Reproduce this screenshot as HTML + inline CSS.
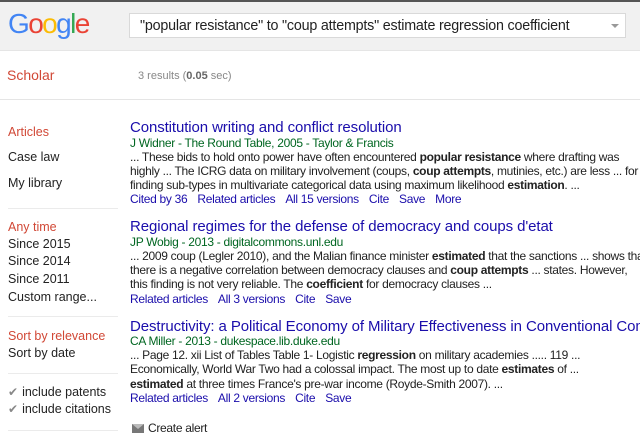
<!DOCTYPE html>
<html><head><meta charset="utf-8"><style>
*{margin:0;padding:0;box-sizing:border-box}
html,body{width:640px;height:441px;overflow:hidden}
body{background:#fff;font-family:"Liberation Sans",Arial,sans-serif;position:relative;color:#222}
#wrap{position:absolute;left:0;top:0;width:640px;height:441px;overflow:hidden}
.a{position:absolute;white-space:nowrap}
#hdr{position:absolute;left:0;top:0;width:640px;height:51px;background:#f1f1f1;border-top:2px solid #555;border-bottom:1px solid #e5e5e5}
#box{position:absolute;left:129px;top:13px;width:497px;height:25px;background:#fff;border:1px solid #d9d9d9;font-size:14.3px;letter-spacing:-0.2px;padding:4px 10px;color:#222;white-space:nowrap;overflow:hidden}
.sb{font-size:12.5px;color:#222}
.red{color:#d14836}
.hl{position:absolute;left:8px;width:110px;height:1px;background:#ebebeb}
.t{font-size:15px;letter-spacing:-0.1px;color:#1a0dab}
.g{font-size:12px;letter-spacing:-0.3px;color:#006621}
.s{font-size:12px;letter-spacing:-0.3px;color:#222}
.l{font-size:12px;letter-spacing:-0.3px;color:#1a0dab}
.l span{margin-right:10px}
.ck{color:#888;font-size:12px;margin-right:4px}
</style></head><body><div id="wrap">
<div id="hdr"></div>
<div class="a" style="left:8px;top:8px;font-size:28px;letter-spacing:-1.6px"><span style="color:#4285f4">G</span><span style="color:#ea4335">o</span><span style="color:#fbbc05">o</span><span style="color:#4285f4">g</span><span style="color:#34a853">l</span><span style="color:#ea4335">e</span></div>
<div id="box">"popular resistance" to "coup attempts" estimate regression coefficient</div>
<div class="a" style="left:611px;top:24px;width:0;height:0;border-left:4px solid transparent;border-right:4px solid transparent;border-top:4px solid #999"></div>
<div class="a red" style="left:7px;top:67px;font-size:14px">Scholar</div>
<div class="a" style="left:138px;top:70px;font-size:11px;color:#888">3 results (<b style="color:#666">0.05</b> sec)</div>
<div class="a" style="left:0;top:99px;width:640px;height:1px;background:#e5e5e5"></div>

<div class="a sb red" style="left:8px;top:125px">Articles</div>
<div class="a sb" style="left:8px;top:150px">Case law</div>
<div class="a sb" style="left:8px;top:176px">My library</div>
<div class="hl" style="top:208px"></div>
<div class="a sb red" style="left:8px;top:220px">Any time</div>
<div class="a sb" style="left:8px;top:237px">Since 2015</div>
<div class="a sb" style="left:8px;top:254px">Since 2014</div>
<div class="a sb" style="left:8px;top:272px">Since 2011</div>
<div class="a sb" style="left:8px;top:290px">Custom range...</div>
<div class="hl" style="top:316px"></div>
<div class="a sb red" style="left:8px;top:329px">Sort by relevance</div>
<div class="a sb" style="left:8px;top:346px">Sort by date</div>
<div class="hl" style="top:373px"></div>
<div class="a sb" style="left:8px;top:385px"><span class="ck">✔</span>include patents</div>
<div class="a sb" style="left:8px;top:402px"><span class="ck">✔</span>include citations</div>
<div class="hl" style="top:430px"></div>

<div class="a t" style="left:130px;top:119px">Constitution writing and conflict resolution</div>
<div class="a g" style="left:130px;top:136px">J Widner - The Round Table, 2005 - Taylor &amp; Francis</div>
<div class="a s" style="left:130px;top:150px">... These bids to hold onto power have often encountered <b>popular resistance</b> where drafting was</div>
<div class="a s" style="left:130px;top:164px">highly ... The ICRG data on military involvement (coups, <b>coup attempts</b>, mutinies, etc.) are less ... for</div>
<div class="a s" style="left:130px;top:178px">finding sub-types in multivariate categorical data using maximum likelihood <b>estimation</b>. ...</div>
<div class="a l" style="left:130px;top:192px"><span>Cited by 36</span><span>Related articles</span><span>All 15 versions</span><span>Cite</span><span>Save</span><span>More</span></div>

<div class="a t" style="left:130px;top:218px">Regional regimes for the defense of democracy and coups d'etat</div>
<div class="a g" style="left:130px;top:235px">JP Wobig - 2013 - digitalcommons.unl.edu</div>
<div class="a s" style="left:130px;top:249px">... 2009 coup (Legler 2010), and the Malian finance minister <b>estimated</b> that the sanctions ... shows that</div>
<div class="a s" style="left:130px;top:263px">there is a negative correlation between democracy clauses and <b>coup attempts</b> ... states. However,</div>
<div class="a s" style="left:130px;top:277px">this finding is not very reliable. The <b>coefficient</b> for democracy clauses ...</div>
<div class="a l" style="left:130px;top:292px"><span>Related articles</span><span>All 3 versions</span><span>Cite</span><span>Save</span></div>

<div class="a t" style="left:130px;top:318px">Destructivity: a Political Economy of Military Effectiveness in Conventional Combat</div>
<div class="a g" style="left:130px;top:334px">CA Miller - 2013 - dukespace.lib.duke.edu</div>
<div class="a s" style="left:130px;top:348px">... Page 12. xii List of Tables Table 1- Logistic <b>regression</b> on military academies ..... 119 ...</div>
<div class="a s" style="left:130px;top:362px">Economically, World War Two had a colossal impact. The most up to date <b>estimates</b> of ...</div>
<div class="a s" style="left:130px;top:377px"><b>estimated</b> at three times France's pre-war income (Royde-Smith 2007). ...</div>
<div class="a l" style="left:130px;top:391px"><span>Related articles</span><span>All 2 versions</span><span>Cite</span><span>Save</span></div>

<div class="a" style="left:132px;top:424px;width:12px;height:9px;background:#777"></div>
<div class="a" style="left:132px;top:424px;width:0;height:0;border-left:6px solid transparent;border-right:6px solid transparent;border-top:5px solid #bbb"></div>
<div class="a s" style="left:148px;top:421px;color:#222">Create alert</div>
</div></body></html>
